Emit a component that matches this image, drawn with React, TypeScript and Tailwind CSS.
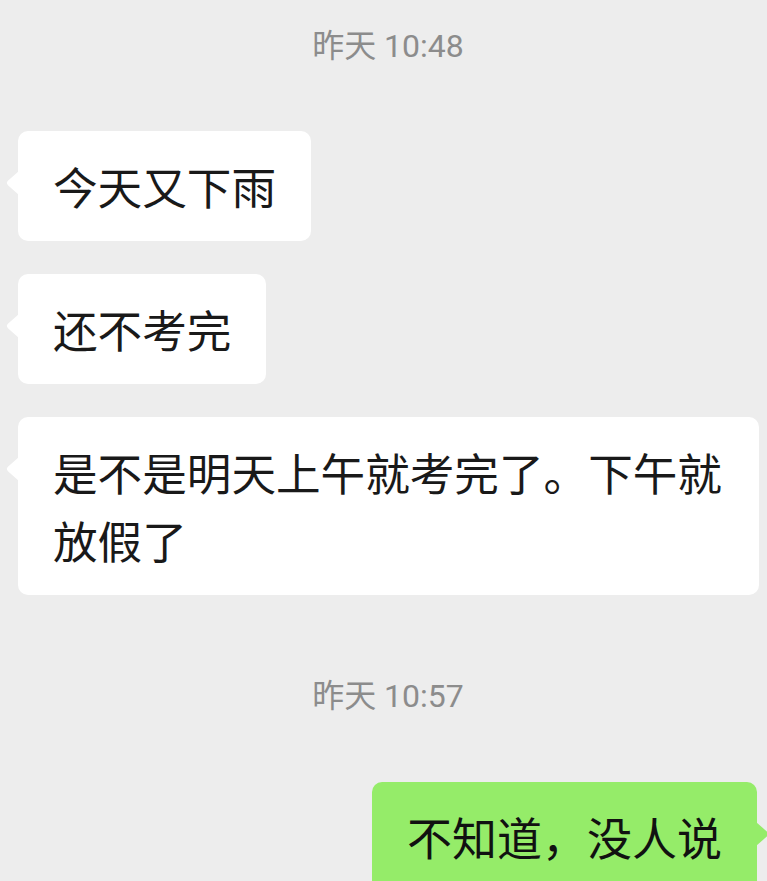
const font = { fontFamily: '"Noto Sans CJK SC", sans-serif' }

function Time({ text, className }: { text: string; className?: string }) {
  return (
    <div
      className={`h-[40px] flex items-center justify-center pl-[9px] text-[32px] text-[#8c8c8c] ${className ?? ''}`}
      style={{ fontFamily: 'Roboto, "Noto Sans CJK SC", sans-serif' }}
    >
      {text}
    </div>
  )
}

function Tail({ side, color }: { side: 'left' | 'right'; color: string }) {
  return (
    <svg
      width="14"
      height="24"
      viewBox="0 0 14 24"
      className={`absolute top-[40px] ${side === 'left' ? '-left-[13px]' : '-right-[13px] -scale-x-100'}`}
    >
      <path d="M14 0 L3.2 9.6 Q0.4 12 3.2 14.4 L14 24 Z" fill={color} />
    </svg>
  )
}

function Received({ text, className }: { text: string; className?: string }) {
  return (
    <div className={`flex ml-[18px] ${className ?? ''}`}>
      <div className="relative max-w-[741px] bg-white rounded-[10px] px-[35px] py-[21px] text-[44.6px] leading-[68px] text-[#191919]">
        <Tail side="left" color="#ffffff" />
        {text}
      </div>
    </div>
  )
}

function Sent({ text, className }: { text: string; className?: string }) {
  return (
    <div className={`flex justify-end mr-[10px] ${className ?? ''}`}>
      <div className="relative max-w-[600px] bg-[#95ec69] rounded-[10px] px-[35px] py-[21px] text-[45px] leading-[68px] text-[#111]">
        <Tail side="right" color="#95ec69" />
        {text}
      </div>
    </div>
  )
}

export default function App() {
  return (
    <div className="w-[767px] h-[881px] overflow-hidden bg-[#ededed] flex flex-col pt-[26px]" style={font}>
      <Time text="昨天 10:48" />
      <Received text="今天又下雨" className="mt-[65px]" />
      <Received text="还不考完" className="mt-[33px]" />
      <Received text="是不是明天上午就考完了。下午就放假了" className="mt-[33px]" />
      <Time text="昨天 10:57" className="mt-[81px]" />
      <Sent text="不知道，没人说" className="mt-[66px]" />
    </div>
  )
}
